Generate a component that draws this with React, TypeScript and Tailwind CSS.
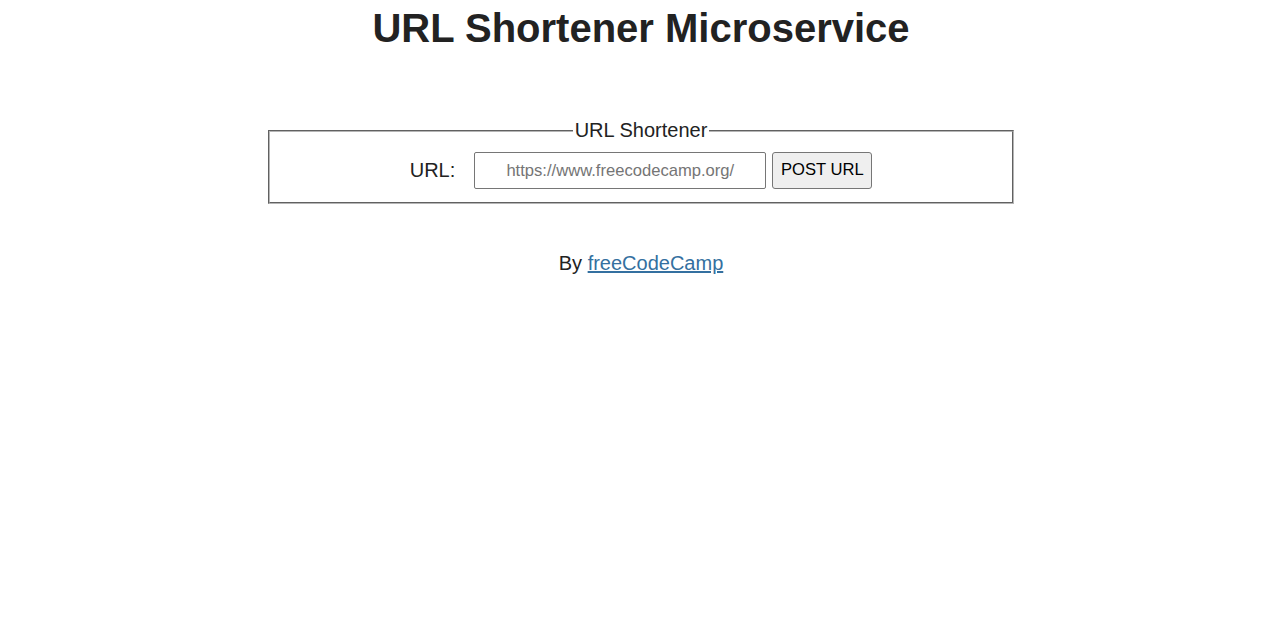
import React from 'react';

export default function App() {
  return (
    <div className="min-h-screen bg-white pl-[2px] text-center text-[#222] font-['Liberation_Sans',Arial,sans-serif]">
      <h1 className="pt-[5px] text-[40px] leading-[46px] font-bold">URL Shortener Microservice</h1>

      <form onSubmit={(e) => e.preventDefault()} className="mt-[68px]">
        <fieldset className="mx-auto w-[746px] border-2 [border-style:groove] border-[#b5b5b5] px-3 pb-[13px]">
          <legend className="mx-auto px-[2px] text-[20px] leading-[23px]">URL Shortener</legend>
          <div className="mt-[10px] flex items-center justify-center">
            <label htmlFor="url_input" className="mr-[19px] text-[20px] leading-[23px]">URL:</label>
            <input
              id="url_input"
              type="text"
              name="url"
              placeholder="https://www.freecodecamp.org/"
              className="h-[37px] w-[292px] rounded-[2px] border border-[#767676] px-2 text-center text-[16.6px] placeholder:text-[#757575]"
            />
            <button
              type="submit"
              className="ml-[6px] h-[37px] w-[100px] rounded-[3px] border border-[#767676] bg-[#efefef] text-[16.6px] text-black"
            >
              POST URL
            </button>
          </div>
        </fieldset>
      </form>

      <p className="mt-[48px] text-[20px] leading-[23px]">
        By{' '}
        <a href="#" className="text-[#3470a0] underline">
          freeCodeCamp
        </a>
      </p>
    </div>
  );
}
